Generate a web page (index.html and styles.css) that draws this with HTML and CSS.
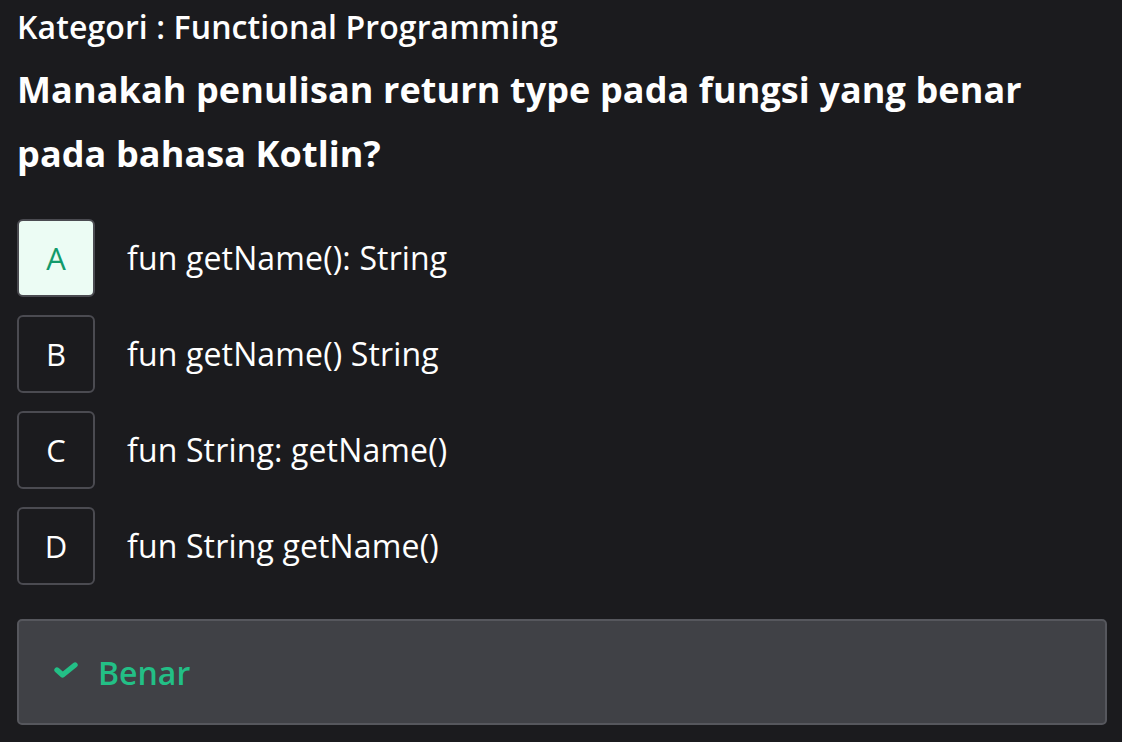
FILE: index.html
```html
<!DOCTYPE html>
<html lang="id">
<head>
<meta charset="utf-8">
<title>Kuis</title>
<link rel="stylesheet" href="styles.css">
</head>
<body>
<main class="quiz">
  <p class="category">Kategori : Functional Programming</p>
  <h1 class="question">Manakah penulisan return type pada fungsi yang benar pada bahasa Kotlin?</h1>
  <ul class="options">
    <li class="option selected"><span class="key">A</span><span class="label">fun getName(): String</span></li>
    <li class="option"><span class="key">B</span><span class="label">fun getName() String</span></li>
    <li class="option"><span class="key">C</span><span class="label">fun String: getName()</span></li>
    <li class="option"><span class="key">D</span><span class="label">fun String getName()</span></li>
  </ul>
  <div class="result">
    <svg class="check" viewBox="0 0 24 16" width="24" height="16" aria-hidden="true"><polyline points="3,8 8.6,13 21,3" fill="none" stroke="currentColor" stroke-width="5.4" stroke-linecap="round" stroke-linejoin="round"/></svg>
    <span class="result-text">Benar</span>
  </div>
</main>
</body>
</html>
```

FILE: styles.css
```css
html, body {
  margin: 0;
  padding: 0;
  background: #1b1b1e;
}
body {
  font-family: "Open Sans", "Noto Sans", sans-serif;
  color: #ffffff;
}
.quiz {
  display: flex;
  flex-direction: column;
  padding: 5px 15px 0 17px;
}
.category {
  margin: 0;
  font-size: 32px;
  font-weight: 600;
  line-height: 44px;
  letter-spacing: 0.1px;
}
.question {
  margin: 9px 0 0;
  font-size: 36px;
  font-weight: 700;
  line-height: 64px;
  letter-spacing: 0.1px;
  max-width: 1060px;
}
.options {
  list-style: none;
  margin: 33px 0 0;
  padding: 0;
  display: flex;
  flex-direction: column;
  gap: 18px;
}
.option {
  display: flex;
  align-items: center;
  gap: 32px;
}
.key {
  box-sizing: border-box;
  width: 78px;
  height: 78px;
  border: 2px solid #4b4b51;
  border-radius: 6px;
  display: flex;
  align-items: center;
  justify-content: center;
  font-size: 31px;
  color: #ffffff;
}
.option.selected .key {
  background: #ecfcf4;
  color: #129a6b;
}
.label {
  font-size: 32px;
  line-height: 40px;
  letter-spacing: 0.15px;
}
.result {
  box-sizing: border-box;
  margin-top: 34px;
  height: 106px;
  background: #404146;
  border: 2px solid #56575d;
  border-radius: 5px;
  display: flex;
  align-items: center;
  gap: 20px;
  padding: 0 0 0 35px;
  color: #23bf86;
}
.check {
  display: block;
  margin-top: -4px;
}
.result-text {
  font-size: 32px;
  font-weight: 600;
}
```
